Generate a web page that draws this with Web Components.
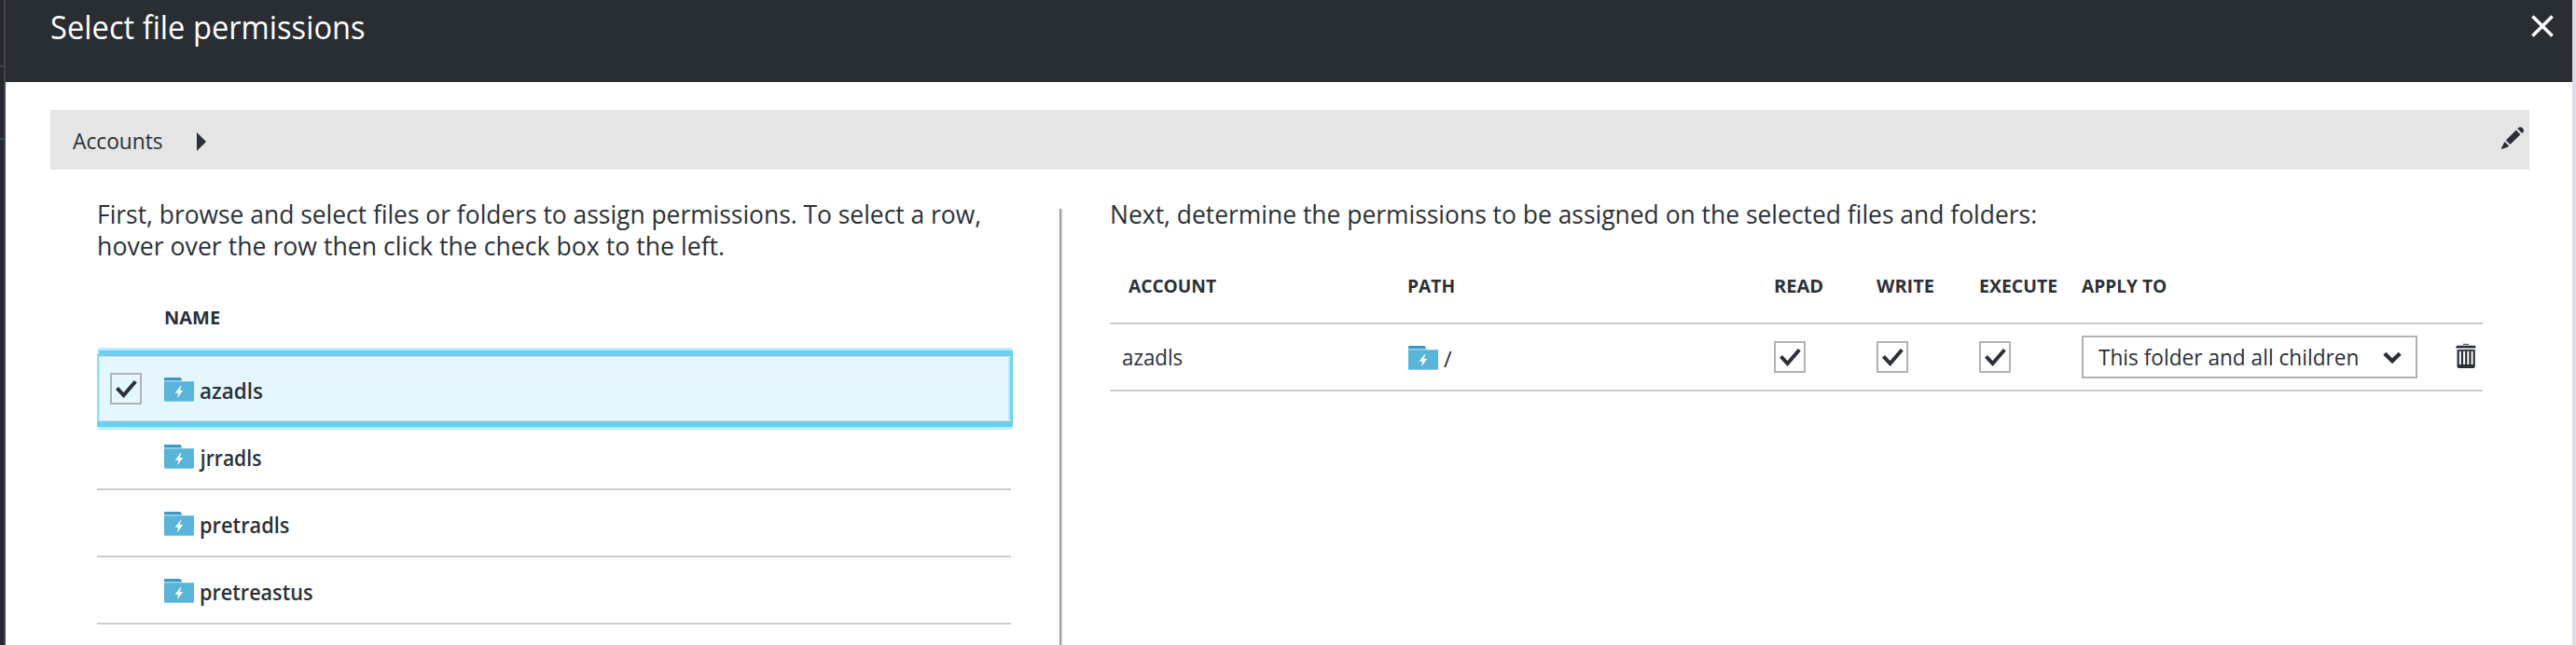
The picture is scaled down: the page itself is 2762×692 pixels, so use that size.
<!DOCTYPE html>
<html lang="en">
<head>
<meta charset="utf-8">
<title>Select file permissions</title>
<style>
  html, body { margin: 0; height: 100%; overflow: hidden; background: #fff; }
  body { font-family: "Open Sans", "Noto Sans", sans-serif; color: #2b3037; }
</style>
</head>
<body>
<permissions-page></permissions-page>
<script>
const define = (name, html, setup) => {
  const tpl = document.createElement('template');
  tpl.innerHTML = html;
  customElements.define(name, class extends HTMLElement {
    connectedCallback() {
      if (this.shadowRoot) return;
      this.attachShadow({ mode: 'open' }).append(tpl.content.cloneNode(true));
      if (setup) setup.call(this);
    }
  });
};

/* One line of text, condensed to the width given in "w" (visible glyph edges). */
const ctx = document.createElement('canvas').getContext('2d');
define('fit-text', `
  <style>
    :host { display: block; flex: none; white-space: nowrap; }
    span { display: inline-block; transform-origin: 0 50%; }
  </style>
  <span><slot></slot></span>`, function () {
  const s = getComputedStyle(this);
  ctx.font = `${s.fontWeight} ${s.fontSize} ${s.fontFamily}`;
  const m = ctx.measureText(this.textContent.trim());
  const w = parseFloat(this.getAttribute('w'));
  const k = w / (m.actualBoundingBoxLeft + m.actualBoundingBoxRight);
  this.style.width = w + 'px';
  this.shadowRoot.querySelector('span').style.transform =
    `translateX(${m.actualBoundingBoxLeft * k}px) scaleX(${k})`;
});

define('folder-icon', `
  <style>:host { display: block; flex: none; width: 32px; height: 26px; } svg { display: block; }</style>
  <svg width="32" height="26" viewBox="0 0 32 26">
    <path d="M0 1Q0 0 1 0H17Q18 0 18.5 1.5L19 4H0Z" fill="#3898c6"/>
    <path d="M0 3H18.6L19.2 4H31Q32 4 32 5V25Q32 26 31 26H1Q0 26 0 25Z" fill="#9fd2e8"/>
    <path d="M0 4.6H32V24Q32 25.2 31 25.2H1Q0 25.2 0 24Z" fill="#59b4d9"/>
    <path d="M17.6 9L11.7 16.7H15.3L13.9 22.3L20.3 14H16.7L18.4 9Z" fill="#fff"/>
  </svg>`);

define('check-box', `
  <style>
    :host { display: block; flex: none; box-sizing: border-box; width: 34px; height: 34px; border: 2px solid #b2b2b2; }
    svg { display: block; }
  </style>
  <svg width="30" height="30" viewBox="0 0 30 30" fill="none" stroke="#2b3037" stroke-width="4">
    <path d="M5.5 14.3L12.6 22L25.3 7.3" stroke-linejoin="miter"/>
  </svg>`);

define('close-icon', `
  <style>:host { display: block; } svg { display: block; }</style>
  <svg width="24" height="24" viewBox="0 0 24 24" stroke="#fff" stroke-width="3.6" fill="none">
    <path d="M1.4 1.4L22.6 22.6M22.6 1.4L1.4 22.6"/>
  </svg>`);

define('pencil-icon', `
  <style>:host { display: block; } svg { display: block; }</style>
  <svg width="24" height="24" viewBox="0 0 24 24" fill="#2b3037">
    <path d="M17.3 2L19 .5Q20.8-.5 22.5 1.2Q24.8 3.5 23.6 5.2L22.1 7Z"/>
    <path d="M15.8 3.5L20.4 8.3L9.5 19L4.8 14.5Z"/>
    <path d="M3.5 16L8.1 20.6L6.9 21.7L0 24.1V22.7Z"/>
  </svg>`);

define('trash-icon', `
  <style>:host { display: block; } svg { display: block; }</style>
  <svg width="22" height="28" viewBox="0 0 22 28">
    <path d="M8 .8H14V2H8Z" fill="#555a60"/>
    <path d="M1.5 2.8H20.5L21.6 4V5.6H.3V4Z" fill="#2b3037"/>
    <path d="M1.5 7H20.8V25Q20.8 27 19 27H3.3Q1.5 27 1.5 25Z" fill="#2b3037"/>
    <path d="M4.8 8.8V23M9.1 8.8V23M13.3 8.8V23M17.6 8.8V23" stroke="#fff" stroke-width="2"/>
  </svg>`);

define('blade-header', `
  <style>
    :host { display: flex; justify-content: space-between; align-items: flex-start; box-sizing: border-box;
      height: 88px; padding: 0 20px 0 49px; background: #292e32; color: #fff; font-size: 35px; line-height: 57px; }
    close-icon { margin-top: 16px; }
  </style>
  <slot></slot><close-icon></close-icon>`);

define('crumb-bar', `
  <style>
    :host { display: flex; align-items: center; box-sizing: border-box; height: 64px; margin: 30px 46px 0 48px;
      padding: 0 6px 0 24px; background: #e5e5e5; font-size: 23.5px; line-height: 40px; }
    ::slotted(*) { margin-top: 2px; }
    svg { margin: 4px 0 0 36.5px; }
    pencil-icon { margin: -4px 0 0 auto; }
  </style>
  <slot></slot>
  <svg width="10" height="20" viewBox="0 0 10 20"><path d="M0 0L10 10L0 20Z" fill="#2b3037"/></svg>
  <pencil-icon></pencil-icon>`);

define('account-row', `
  <style>
    :host { display: grid; grid-template-columns: 58px 32px auto; align-items: start; box-sizing: border-box;
      height: 72px; padding-left: 14px; border-bottom: 2px solid #ccc; font-size: 23.5px; font-weight: 600; line-height: 36px; }
    folder-icon { margin-top: 23px; grid-column: 2; grid-row: 1; }
    ::slotted(*) { margin: 19px 0 0 6.5px; grid-column: 3; grid-row: 1; }
    check-box { display: none; margin-top: 18px; grid-column: 1; grid-row: 1; }
    :host([selected]) { background: #e5f7fe; border-color: #8fc3d6;
      box-shadow: inset 0 1px #b4eafa, inset 0 -1px #b4eafa, inset 2px 0 #8be0f8, inset 3px 0 #b4eafa,
        inset -1px 0 #83cfe4, inset -3px 0 #b4eafa, 2px 0 #5fd4f7,
        0 -2px #8fc3d6, 2px -6px #5fd4f7, 0 4px #5fd4f7, 2px 4px #5fd4f7, 1px -9px #bdeefc, 1px 7px #bdeefc;
      clip-path: inset(-9px -2px -7px 0); position: relative; }
    :host([selected]) check-box { display: block; }
  </style>
  <check-box></check-box><folder-icon></folder-icon><slot></slot>`);

define('account-picker', `
  <style>
    :host { display: block; width: 980px; }
    .intro { font-size: 27.2px; line-height: 34px; padding: 13px 0 0 1.5px; }
    .head { box-sizing: border-box; font-size: 19.8px; font-weight: 700; line-height: 34px; padding: 42.5px 0 0 73px; height: 101px; }
  </style>
  <div class="intro">
    <fit-text w="945">First, browse and select files or folders to assign permissions. To select a row,</fit-text>
    <fit-text w="670">hover over the row then click the check box to the left.</fit-text>
  </div>
  <div class="head"><fit-text w="58">NAME</fit-text></div>
  <account-row selected><fit-text w="66.5">azadls</fit-text></account-row>
  <account-row><fit-text w="67" style="margin-left:5px">jrradls</fit-text></account-row>
  <account-row><fit-text w="95">pretradls</fit-text></account-row>
  <account-row><fit-text w="120">pretreastus</fit-text></account-row>`);

define('drop-down', `
  <style>
    :host { display: flex; align-items: center; box-sizing: border-box; width: 360px; height: 46px;
      border: 2px solid #b2b2b2; padding: 0 15px 0 15.5px; font-size: 23.5px; line-height: 42px; }
    svg { margin: 2px 0 0 auto; }
  </style>
  <slot></slot>
  <svg width="20" height="14" viewBox="0 0 20 14"><path d="M1.8 2.2L10 10.2L18.2 2.2" fill="none" stroke="#2b3037" stroke-width="4.4"/></svg>`);

define('permission-table', `
  <style>
    :host { display: block; width: 1472px; }
    .intro { font-size: 27.2px; line-height: 34px; padding: 13px 0 0 1.5px; height: 34px; }
    .row { display: grid; grid-template-columns: 320px 392px 110px 110px 110px 401px auto; box-sizing: border-box; border-bottom: 2px solid #ccc; }
    .head { height: 101px; padding-top: 43px; font-size: 19.8px; font-weight: 700; line-height: 34px; }
    .body { height: 72px; font-size: 23.5px; line-height: 36px; }
    .body > * { margin-top: 18px; }
    .body > fit-text { margin: 17px 0 0 14px; }
    .path { display: flex; gap: 6px; }
    .body > .path { margin-top: 17px; }
    .path folder-icon { margin-top: 6px; }
    .path fit-text { margin-top: 2px; }
    .body > drop-down { margin-top: 12px; }
    .body > trash-icon { margin: 20px 0 0 0; }
  </style>
  <div class="intro"><fit-text w="991">Next, determine the permissions to be assigned on the selected files and folders:</fit-text></div>
  <div class="row head">
    <fit-text w="94.5" style="margin-left:19.5px">ACCOUNT</fit-text>
    <fit-text w="49">PATH</fit-text>
    <fit-text w="51.5" style="margin-left:.5px">READ</fit-text>
    <fit-text w="61">WRITE</fit-text>
    <fit-text w="82" style="margin-left:.5px">EXECUTE</fit-text>
    <fit-text w="90.5">APPLY TO</fit-text>
  </div>
  <div class="row body">
    <fit-text w="64">azadls</fit-text>
    <div class="path"><folder-icon></folder-icon><fit-text w="9">/</fit-text></div>
    <check-box></check-box><check-box></check-box><check-box></check-box>
    <drop-down><fit-text w="278">This folder and all children</fit-text></drop-down>
    <trash-icon></trash-icon>
  </div>`);

define('permissions-page', `
  <style>
    :host { display: grid; grid-template-columns: 6px 1fr 4px; height: 692px; overflow: hidden; }
    .rail { background: #25292d; border-right: 2px solid #41464a; display: flex; flex-direction: column; }
    .rail i { height: 76px; border-bottom: 2px solid #41464a; }
    .rail i:first-child { height: 70px; }
    .edge { background: #dcdce6; }
    .content { display: flex; padding-left: 98px; height: 510px; }
    .divider { box-sizing: border-box; width: 4px; margin: 42px 50px 0 52px; border-left: 2px solid #999; background: #eee; }
  </style>
  <div class="rail"><i></i><i></i></div>
  <main>
    <blade-header><fit-text w="336">Select file permissions</fit-text></blade-header>
    <crumb-bar><fit-text w="96.5">Accounts</fit-text></crumb-bar>
    <div class="content">
      <account-picker style="padding-top:18px"></account-picker>
      <div class="divider"></div>
      <permission-table style="padding-top:18px"></permission-table>
    </div>
  </main>
  <div class="edge"></div>`);
</script>
</body>
</html>
